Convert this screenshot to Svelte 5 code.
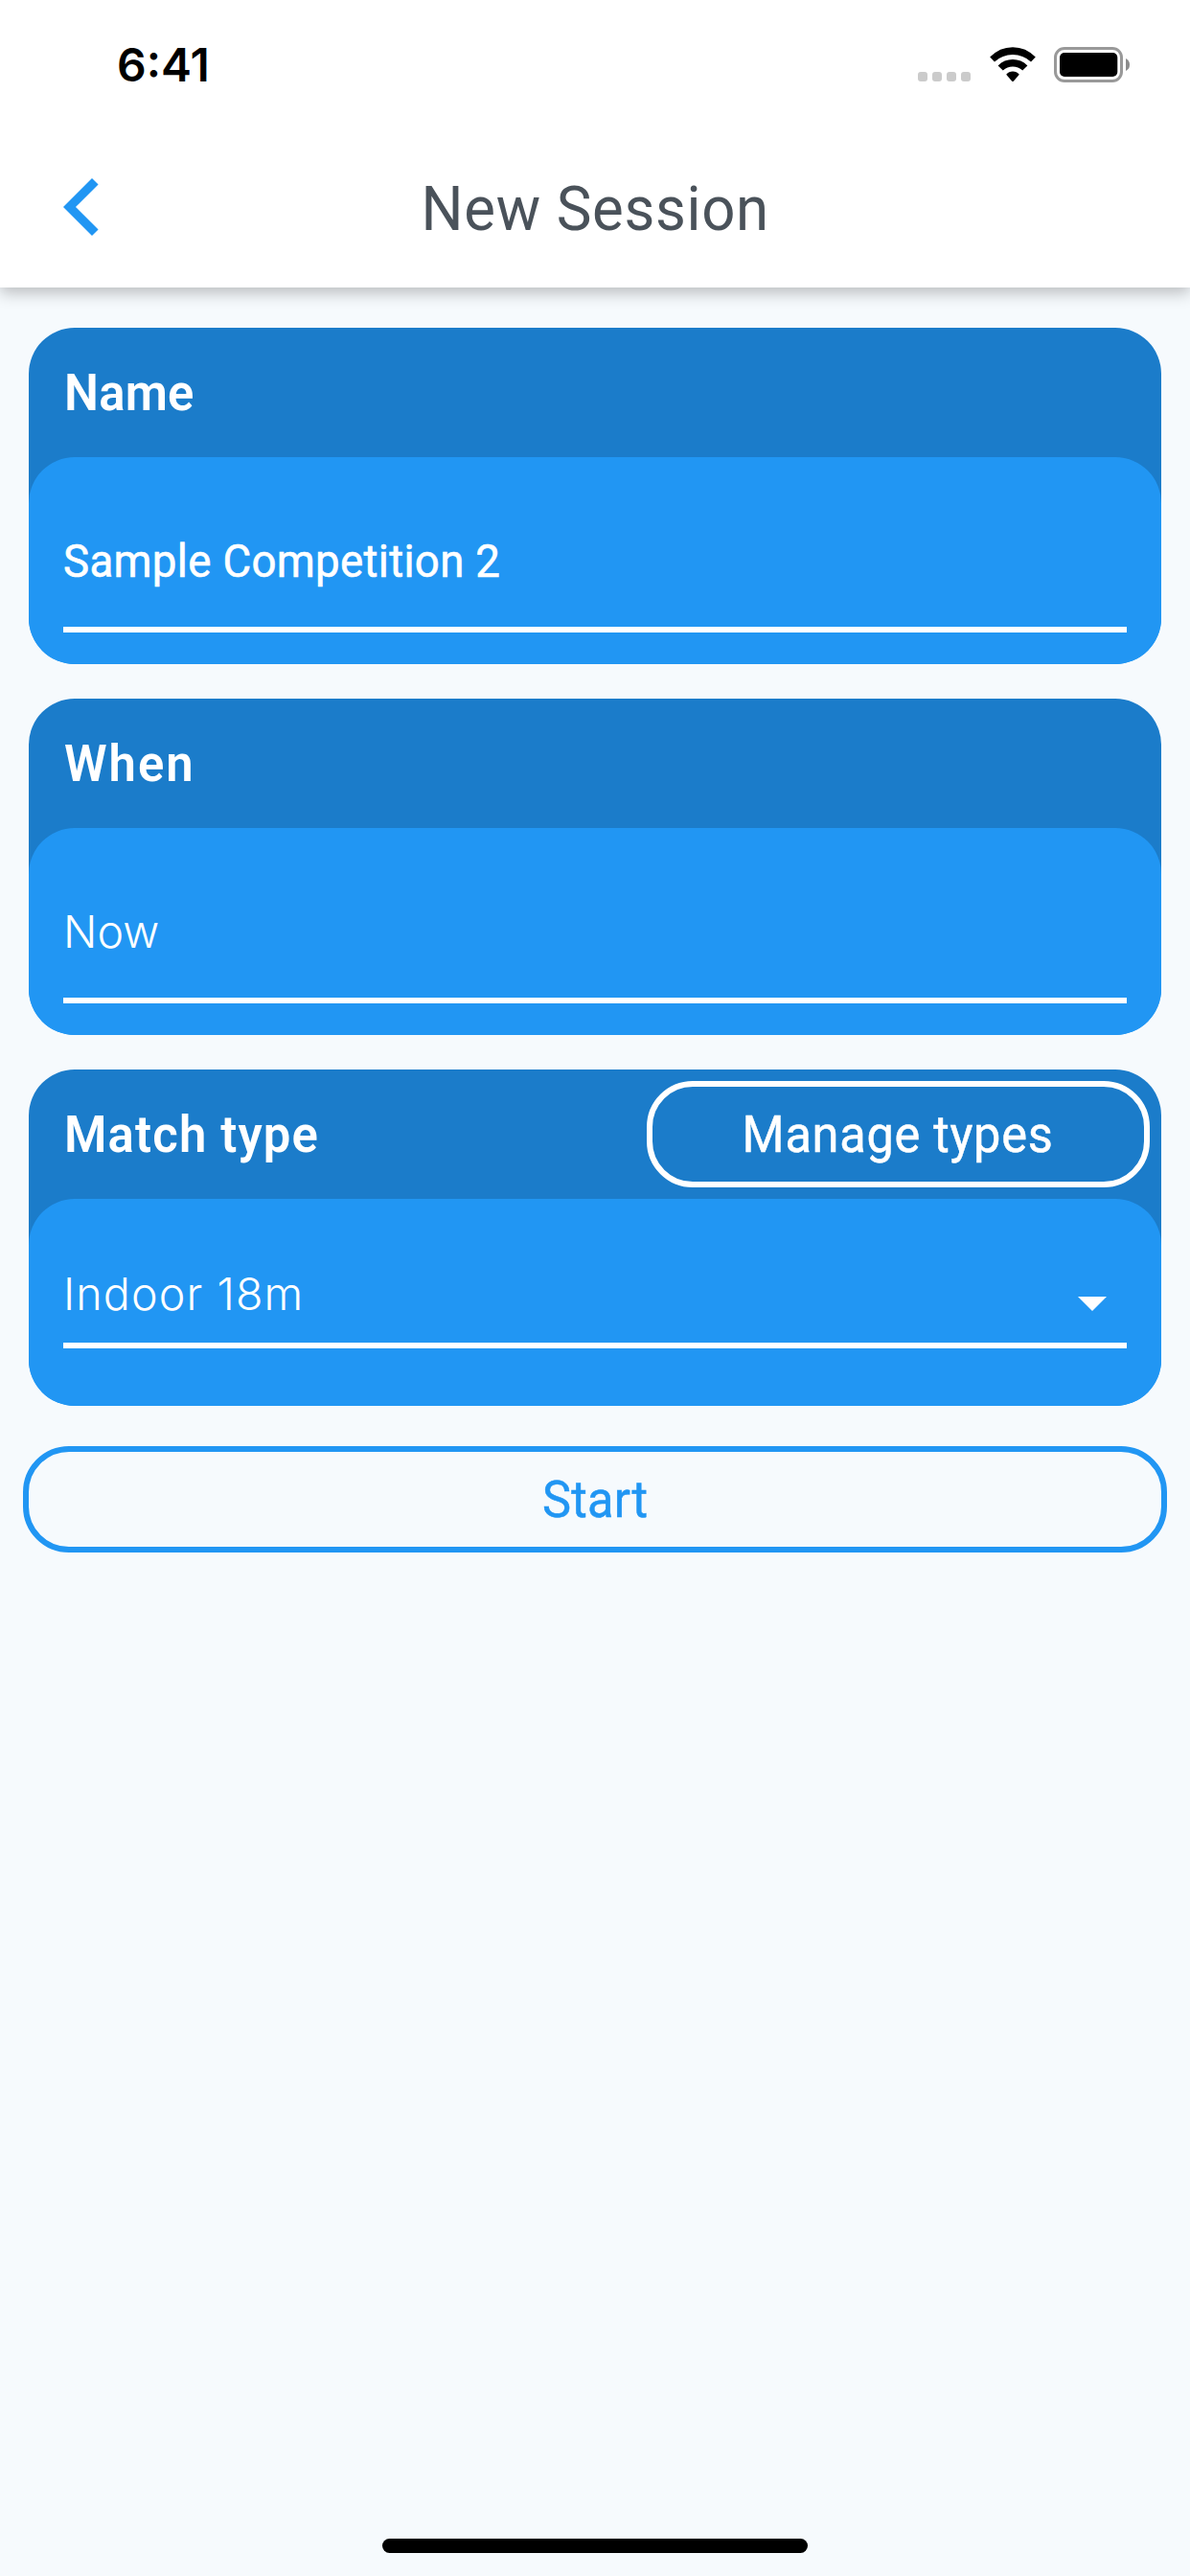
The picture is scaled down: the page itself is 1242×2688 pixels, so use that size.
<script>
  let name = $state('Sample Competition 2');
  let when = $state('Now');
  let matchType = $state('Indoor 18m');
</script>

<div class="screen">
  <header class="top">
    <div class="status">
      <span class="time">6:41</span>
      <div class="indicators">
        <div class="signal"><i></i><i></i><i></i><i></i></div>
        <svg class="wifi" width="48" height="37" viewBox="0 0 48 37" aria-hidden="true">
          <path d="M.2 10.6Q10.2.2 24 .2T47.8 10.6L43 15.4Q34.8 7.9 24 7.9T5 15.4Z" />
          <path d="M8.6 19.4Q15.2 13 24 13T39.4 19.4L34.2 24.6Q29.8 20.6 24 20.6T13.8 24.6Z" />
          <path d="M17.2 28.7Q20 25.5 24 25.5T30.8 28.7L25 35.4Q24 36.5 23 35.4Z" />
        </svg>
        <svg class="battery" width="79" height="37" viewBox="0 0 79 37" aria-hidden="true">
          <rect x="1.5" y="1.5" width="69" height="34" rx="9.5" fill="none" stroke="#999" stroke-width="3" />
          <rect x="6" y="6" width="60.3" height="25" rx="5" />
          <path d="M75 12Q79 14 79 18.5T75 25Z" fill="#8c8c8c" />
        </svg>
      </div>
    </div>
    <nav class="nav">
      <svg class="back" width="37" height="60" viewBox="0 0 37 60" role="img" aria-label="Back">
        <path d="M30 0L36.6 6.5L13 30L36.6 53.5L30 60L0 30Z" fill="#2196f3" />
      </svg>
      <h1><span class="label">New Session</span></h1>
    </nav>
  </header>

  <main>
    <section class="card">
      <div class="head"><h2 class="label">Name</h2></div>
      <div class="body">
        <div class="field"><span class="label typed">{name}</span></div>
      </div>
    </section>

    <section class="card">
      <div class="head"><h2 class="label wide">When</h2></div>
      <div class="body">
        <div class="field"><span class="light">{when}</span></div>
      </div>
    </section>

    <section class="card">
      <div class="head">
        <h2 class="label match">Match type</h2>
        <button class="manage"><span class="label">Manage types</span></button>
      </div>
      <div class="body select">
        <div class="field">
          <span class="light spaced">{matchType}</span>
          <svg class="caret" width="30" height="15" viewBox="0 0 30 15" aria-hidden="true"><path d="M0 0H30L15 15Z" fill="#fff" /></svg>
        </div>
      </div>
    </section>

    <button class="start"><span class="label">Start</span></button>
  </main>

  <div class="home"></div>
</div>

<style>
  :global(body) { margin: 0; background: #f6fafd; }
  .screen {
    box-sizing: border-box;
    width: 1242px;
    min-height: 2688px;
    padding-bottom: 24px;
    display: flex;
    flex-direction: column;
    background: #f6fafd;
    font-family: Roboto, 'Liberation Sans', sans-serif;
    overflow: hidden;
  }
  .top { height: 300px; background: #fff; box-shadow: 0 6px 15px rgba(0, 0, 0, 0.24); }
  .status {
    box-sizing: border-box;
    height: 135px;
    padding: 0 63px 0 122px;
    display: flex;
    align-items: center;
    justify-content: space-between;
  }
  .time { font: 600 48px/60px Inter, sans-serif; color: #000; }
  .indicators { display: flex; align-items: flex-end; height: 37px; }
  .signal { display: flex; gap: 5px; margin: 0 20px 1px 0; }
  .signal i { width: 10px; height: 10px; border-radius: 3px; background: #cbcbcb; }
  .wifi { margin-right: 19px; }
  svg { display: block; flex: none; }
  .nav {
    display: grid;
    grid-template-columns: 1fr auto 1fr;
    align-items: center;
    height: 165px;
  }
  .back { margin: 0 0 3px 66px; }
  h1, h2 { margin: 0; font-weight: 400; }
  h1 { font-size: 65px; line-height: 80px; letter-spacing: 0.7px; color: #4a525a; }
  .label { display: inline-block; transform: scaleX(0.95); white-space: nowrap; }
  main { display: flex; flex-direction: column; padding: 42px 24px 0; }
  .card {
    margin: 0 6px 36px;
    border-radius: 48px;
    background: linear-gradient(#1b7cca 200px, #2196f3 200px);
    color: #fff;
  }
  .head {
    box-sizing: border-box;
    height: 135px;
    padding: 0 12px 0 37px;
    display: flex;
    align-items: center;
    justify-content: space-between;
  }
  h2 {
    font-size: 53.5px;
    font-weight: 600;
    line-height: 64px;
    letter-spacing: 0.2px;
    padding-top: 1px;
    transform-origin: left center;
  }
  .wide { letter-spacing: 2.1px; }
  .match { letter-spacing: 1.2px; }
  .body { padding: 40px 36px 33px; border-radius: 48px; background: #2196f3; }
  .field {
    display: flex;
    align-items: center;
    justify-content: space-between;
    height: 137px;
    border-bottom: 6px solid #fff;
  }
  .select { padding: 49px 36px 60px; }
  .select .field { height: 101px; }
  .typed {
    font-size: 48px;
    line-height: 60px;
    letter-spacing: 0.35px;
    -webkit-text-stroke: 0.6px currentColor;
    transform-origin: left center;
  }
  .light { font: 300 46.6px/60px Inter, sans-serif; padding-bottom: 2px; }
  .spaced { letter-spacing: 1.1px; }
  .caret { margin: 20px 21px 0 0; }
  button {
    box-sizing: border-box;
    height: 111px;
    padding: 1px 0 0;
    border: 6px solid currentColor;
    border-radius: 48px;
    background: none;
    color: inherit;
    font: 400 53.2px/64px Roboto, 'Liberation Sans', sans-serif;
    letter-spacing: 0.75px;
    -webkit-text-stroke: 0.5px currentColor;
  }
  .manage { width: 525px; }
  .start { margin-top: 6px; color: #2196f3; letter-spacing: 0.3px; }
  .home { width: 444px; height: 15px; margin: auto auto 0; border-radius: 8px; background: #000; }
</style>
